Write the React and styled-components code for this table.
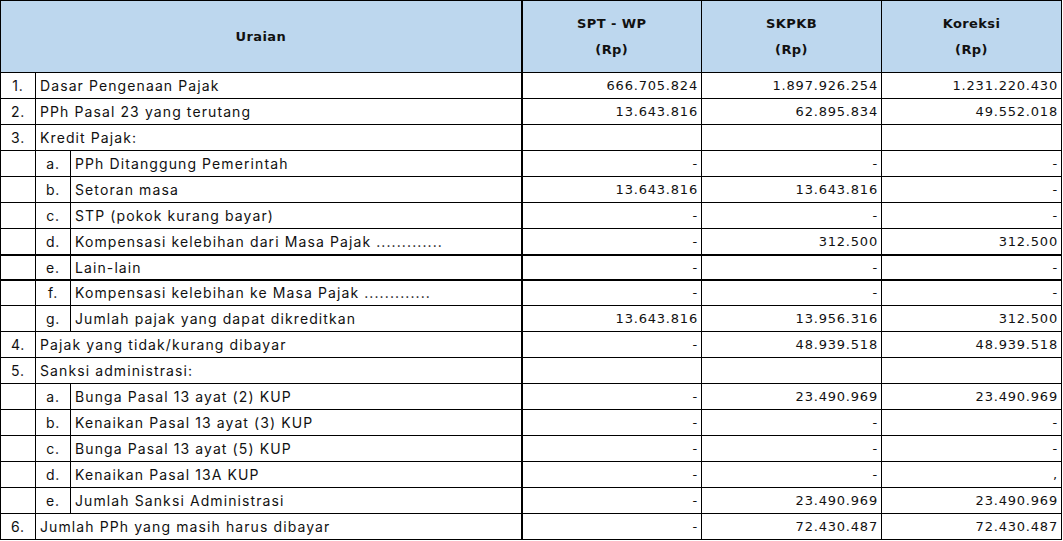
import React from "react";
import styled, { createGlobalStyle } from "styled-components";

const GlobalStyle = createGlobalStyle`
  html, body {
    margin: 0;
    padding: 0;
    background: #ffffff;
  }
`;

const Table = styled.table`
  border-collapse: collapse;
  table-layout: fixed;
  width: 1061px;
  color: #111;
`;

const HeadCell = styled.th`
  background: #bdd7ee;
  border: 1px solid #000;
  border-left-width: ${(p) => (p.thick ? "2px" : "1px")};
  height: 71px;
  padding: 0;
  font-family: "DejaVu Sans", Verdana, sans-serif;
  font-size: 13px;
  font-weight: bold;
  letter-spacing: 0.4px;
  line-height: 26px;
  text-align: center;
  vertical-align: middle;
`;

const Row = styled.tr`
  height: ${(p) => (p.thick ? "25px" : "26px")};
  border-top: ${(p) => (p.thick ? "2px solid #000" : "1px solid #000")};
  border-bottom: ${(p) => (p.thick ? "2px solid #000" : "1px solid #000")};
`;

const NumCell = styled.td`
  border: 1px solid #000;
  padding: 0;
  font-family: Inter, "Open Sans", sans-serif;
  font-size: 14px;
  letter-spacing: 0.8px;
  text-align: center;
  vertical-align: middle;
`;

const LabelCell = styled.td`
  border: 1px solid #000;
  padding: 0 4px 0 4px;
  font-family: Inter, "Open Sans", sans-serif;
  font-size: 14px;
  letter-spacing: 1.1px;
  white-space: nowrap;
  overflow: hidden;
  vertical-align: middle;
`;

const ValueCell = styled.td`
  border: 1px solid #000;
  border-left-width: ${(p) => (p.thick ? "2px" : "1px")};
  padding: 0 3px 0 4px;
  font-family: "DejaVu Sans", Verdana, sans-serif;
  font-size: 13px;
  letter-spacing: 0.8px;
  text-align: right;
  vertical-align: middle;
`;

const rows = [
  { no: "1.", label: "Dasar Pengenaan Pajak", v: ["666.705.824", "1.897.926.254", "1.231.220.430"] },
  { no: "2.", label: "PPh Pasal 23 yang terutang", v: ["13.643.816", "62.895.834", "49.552.018"] },
  { no: "3.", label: "Kredit Pajak:", v: ["", "", ""] },
  { sub: "a.", label: "PPh Ditanggung Pemerintah", v: ["-", "-", "-"] },
  { sub: "b.", label: "Setoran masa", v: ["13.643.816", "13.643.816", "-"] },
  { sub: "c.", label: "STP (pokok kurang bayar)", v: ["-", "-", "-"] },
  { sub: "d.", label: "Kompensasi kelebihan dari Masa Pajak .............", v: ["-", "312.500", "312.500"] },
  { sub: "e.", label: "Lain-lain", v: ["-", "-", "-"], thick: true },
  { sub: "f.", label: "Kompensasi kelebihan ke Masa Pajak .............", v: ["-", "-", "-"] },
  { sub: "g.", label: "Jumlah pajak yang dapat dikreditkan", v: ["13.643.816", "13.956.316", "312.500"] },
  { no: "4.", label: "Pajak yang tidak/kurang dibayar", v: ["-", "48.939.518", "48.939.518"] },
  { no: "5.", label: "Sanksi administrasi:", v: ["", "", ""] },
  { sub: "a.", label: "Bunga Pasal 13 ayat (2) KUP", v: ["-", "23.490.969", "23.490.969"] },
  { sub: "b.", label: "Kenaikan Pasal 13 ayat (3) KUP", v: ["-", "-", "-"] },
  { sub: "c.", label: "Bunga Pasal 13 ayat (5) KUP", v: ["-", "-", "-"] },
  { sub: "d.", label: "Kenaikan Pasal 13A KUP", v: ["-", "-", ","] },
  { sub: "e.", label: "Jumlah Sanksi Administrasi", v: ["-", "23.490.969", "23.490.969"] },
  { no: "6.", label: "Jumlah PPh yang masih harus dibayar", v: ["-", "72.430.487", "72.430.487"] },
];

export default function App() {
  return (
    <>
      <GlobalStyle />
      <Table>
        <colgroup>
          <col style={{ width: 35 }} />
          <col style={{ width: 35 }} />
          <col style={{ width: 451 }} />
          <col style={{ width: 180 }} />
          <col style={{ width: 180 }} />
          <col style={{ width: 180 }} />
        </colgroup>
        <thead>
          <tr>
            <HeadCell colSpan={3}>Uraian</HeadCell>
            <HeadCell thick>
              SPT - WP
              <br />
              (Rp)
            </HeadCell>
            <HeadCell>
              SKPKB
              <br />
              (Rp)
            </HeadCell>
            <HeadCell>
              Koreksi
              <br />
              (Rp)
            </HeadCell>
          </tr>
        </thead>
        <tbody>
          {rows.map((r, i) => (
            <Row key={i} thick={r.thick ? 1 : 0}>
              {r.sub ? (
                <>
                  <NumCell />
                  <NumCell>{r.sub}</NumCell>
                  <LabelCell>{r.label}</LabelCell>
                </>
              ) : (
                <>
                  <NumCell>{r.no}</NumCell>
                  <LabelCell colSpan={2}>{r.label}</LabelCell>
                </>
              )}
              <ValueCell thick>{r.v[0]}</ValueCell>
              <ValueCell>{r.v[1]}</ValueCell>
              <ValueCell>{r.v[2]}</ValueCell>
            </Row>
          ))}
        </tbody>
      </Table>
    </>
  );
}
